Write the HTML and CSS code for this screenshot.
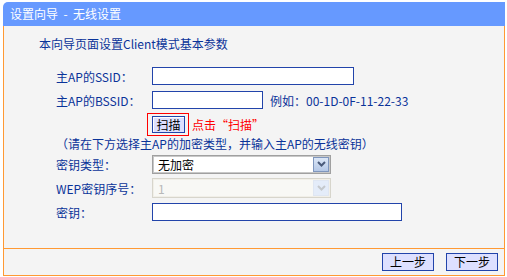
FILE: index.html
```html
<!DOCTYPE html>
<html lang="zh-CN">
<head>
    <meta charset="UTF-8">
    <title>设置向导 - 无线设置</title>
    <link rel="stylesheet" href="styles.css">
</head>
<body>

    <div class="wizard">
        <div class="wizard-head">设置向导 &nbsp;-&nbsp; 无线设置</div>

        <div class="wizard-body">
            <div class="intro">本向导页面设置Client模式基本参数</div>

            <div class="row">
                <label class="label">主AP的SSID：</label>
                <input class="text" type="text" style="width: 202px;">
            </div>

            <div class="row">
                <label class="label">主AP的BSSID：</label>
                <input class="text" type="text" style="width: 111px;">
                <span class="hint">例如：00-1D-0F-11-22-33</span>
            </div>

            <div class="row">
                <span class="label"></span>
                <span class="scan-box"><button class="btn scan">扫描</button></span>
                <span class="scan-tip">点击“扫描”</span>
            </div>

            <div class="note">（请在下方选择主AP的加密类型，并输入主AP的无线密钥）</div>

            <div class="row">
                <label class="label">密钥类型：</label>
                <div class="select-wrap">
                    <select class="select">
                        <option>无加密</option>
                    </select>
                    <span class="arrow">
                        <svg width="9" height="6" viewBox="0 0 9 6"><path d="M1 1 L4.5 4.5 L8 1" fill="none" stroke="#4a5a7a" stroke-width="2"/></svg>
                    </span>
                </div>
            </div>

            <div class="row">
                <label class="label">WEP密钥序号：</label>
                <div class="select-wrap disabled">
                    <select class="select" disabled>
                        <option>1</option>
                    </select>
                    <span class="arrow">
                        <svg width="9" height="6" viewBox="0 0 9 6"><path d="M1 1 L4.5 4.5 L8 1" fill="none" stroke="#c4c8cc" stroke-width="2"/></svg>
                    </span>
                </div>
            </div>

            <div class="row">
                <label class="label">密钥：</label>
                <input class="text" type="text" style="width: 250px;">
            </div>
        </div>

        <div class="wizard-foot">
            <button class="btn step">上一步</button>
            <button class="btn step">下一步</button>
        </div>
    </div>

</body>
</html>
```

FILE: styles.css
```css
body { margin: 0; padding: 2px 2px 0 3px; background: #ffffff; font-family: "Noto Sans CJK SC", "DejaVu Sans", sans-serif; font-size: 12px; color: #0a3399; }

.wizard { width: 502px; }
.wizard-head { height: 24px; line-height: 24px; padding-left: 7px; background: #6699ff; color: #ffffff; border-top-left-radius: 5px; }
.wizard-body { height: 222px; background: #f4f4f4; border-left: 1px solid #ff9933; border-right: 1px solid #ff9933; padding-left: 52px; box-sizing: border-box; padding-top: 10px; }
.wizard-foot { height: 26px; background: #f4f4f4; border: 1px solid #ff9933; display: flex; justify-content: flex-end; align-items: center; gap: 12px; padding-right: 6px; }

.intro { height: 16px; line-height: 16px; margin-left: -17px; margin-bottom: 12px; }

.row { height: 24px; display: flex; align-items: center; }
.label { width: 96px; flex: none; white-space: nowrap; }
.hint { margin-left: 7px; }

.note { height: 16px; line-height: 16px; white-space: nowrap; }

.text { height: 18px; box-sizing: border-box; border: 1px solid #2244aa; background: #ffffff; padding: 0 3px; margin: 0; font: inherit; }

.btn { font-family: inherit; font-size: 12px; color: #000000; background: #dde0ff; border: 1px solid #2244aa; padding: 0; margin: 0; cursor: pointer; }
.scan-box { margin-left: -5px; border: 1px solid #ff0000; padding: 2px 3px 2px 4px; display: flex; }
.scan { width: 33px; height: 17px; line-height: 15px; box-shadow: inset 1px 1px 0 #ffffff; }
.scan-tip { color: #ff0000; margin-left: 3px; }
.step { width: 52px; height: 18px; line-height: 16px; }

.select-wrap { position: relative; width: 179px; height: 19px; }
.select { appearance: none; -webkit-appearance: none; width: 100%; height: 100%; box-sizing: border-box; border: 1px solid #a0a0a0; box-shadow: inset 0 0 0 1px #c8c8c8; background: #ffffff; color: #000000; font: inherit; padding: 0 5px; margin: 0; outline: none; }
.arrow { position: absolute; top: 2px; right: 2px; width: 16px; height: 15px; box-sizing: border-box; border: 1px solid #7f96bd; background: linear-gradient(#dce7f7, #b4c7e6); display: flex; align-items: center; justify-content: center; pointer-events: none; }

.disabled { height: 20px; }
.disabled .select { border-color: #ccc8bc; background: #fbfbf6; color: #a0a0a0; box-shadow: inset 0 0 0 1px #f0ede4; }
.disabled .arrow { height: 16px; border-color: #dfe6f2; background: #e4ecf9; }
```
